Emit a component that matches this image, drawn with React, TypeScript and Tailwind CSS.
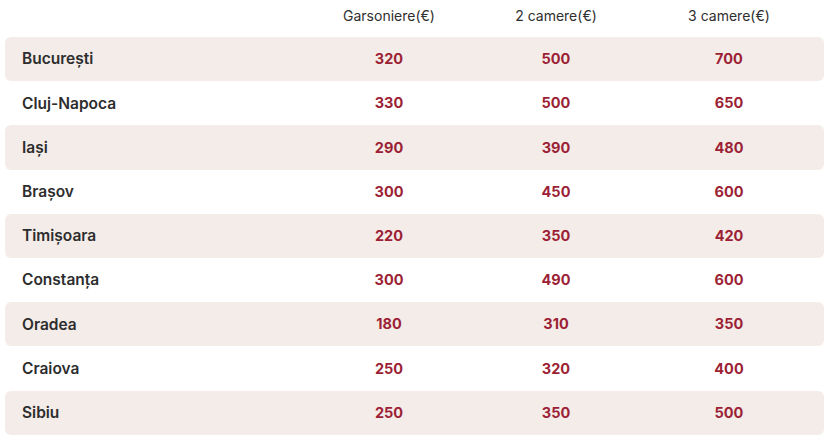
const rows = [
  { city: "București", g: 320, c2: 500, c3: 700 },
  { city: "Cluj-Napoca", g: 330, c2: 500, c3: 650 },
  { city: "Iași", g: 290, c2: 390, c3: 480 },
  { city: "Brașov", g: 300, c2: 450, c3: 600 },
  { city: "Timișoara", g: 220, c2: 350, c3: 420 },
  { city: "Constanța", g: 300, c2: 490, c3: 600 },
  { city: "Oradea", g: 180, c2: 310, c3: 350 },
  { city: "Craiova", g: 250, c2: 320, c3: 400 },
  { city: "Sibiu", g: 250, c2: 350, c3: 500 },
];

export default function App() {
  return (
    <div className="w-[830px] h-[441px] bg-white pl-[5px] pr-[6px] font-['Inter',sans-serif]">
      {/* Header */}
      <div className="grid grid-cols-[301px_166px_168px_178px] h-[37px] pb-[7px] items-center text-[14px] text-[#2f2f2f]">
        <div />
        <div className="text-center">Garsoniere(€)</div>
        <div className="text-center">2 camere(€)</div>
        <div className="text-center">3 camere(€)</div>
      </div>

      {/* Rows */}
      <div className="flex flex-col">
        {rows.map((r, i) => (
          <div
            key={r.city}
            className={`grid grid-cols-[301px_166px_168px_178px] h-[44.2px] items-center rounded-md ${
              i % 2 === 0 ? "bg-[#f3ece8]" : "bg-white"
            }`}
          >
            <div className="pl-[17px] text-[15.5px] font-semibold text-[#2d2d2d]">{r.city}</div>
            <div className="text-center text-[14.5px] font-bold text-[#9c1f35]">{r.g}</div>
            <div className="text-center text-[14.5px] font-bold text-[#9c1f35]">{r.c2}</div>
            <div className="text-center text-[14.5px] font-bold text-[#9c1f35]">{r.c3}</div>
          </div>
        ))}
      </div>
    </div>
  );
}
